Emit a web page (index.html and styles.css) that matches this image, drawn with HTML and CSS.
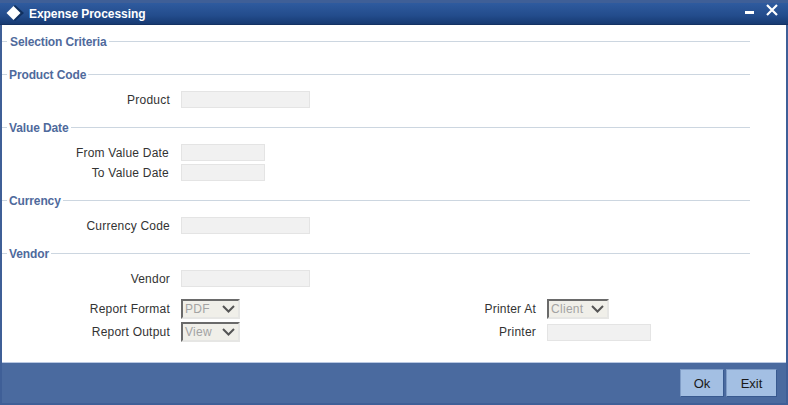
FILE: index.html
```html
<!DOCTYPE html>
<html lang="en">
<head>
<meta charset="utf-8">
<title>Expense Processing</title>
<link rel="stylesheet" href="styles.css">
</head>
<body>
<div class="window">
  <header class="titlebar">
    <svg class="logo" width="18" height="18" viewBox="0 0 18 18"><path d="M9 1l9 8-9 8-8-8z" fill="#10305f"/><path d="M7.500 2l7 7-7 7-7-7z" fill="#fff"/></svg>
    <h1 class="title">Expense Processing</h1>
    <div class="controls">
      <span class="minimize"></span>
      <svg class="close" width="14" height="13" viewBox="0 0 14 13"><path d="M2 1l10 10M12 1L2 11" stroke="#fff" stroke-width="2.2" fill="none"/></svg>
    </div>
  </header>
  <main class="content">
    <div class="legend first"><span>Selection Criteria</span></div>
    <div class="legend gap-a"><span>Product Code</span></div>
    <div class="row row-first"><label class="lab">Product</label><span class="input wide"></span></div>
    <div class="legend gap-b"><span>Value Date</span></div>
    <div class="row row-first"><label class="lab lab-n">From Value Date</label><span class="input narrow"></span></div>
    <div class="row row-tight"><label class="lab lab-n">To Value Date</label><span class="input narrow"></span></div>
    <div class="legend gap-b"><span>Currency</span></div>
    <div class="row row-first"><label class="lab">Currency Code</label><span class="input wide"></span></div>
    <div class="legend gap-b"><span>Vendor</span></div>
    <div class="row row-first"><label class="lab">Vendor</label><span class="input wide"></span></div>
    <div class="row row-report">
      <label class="lab">Report Format</label>
      <span class="select sel-report"><span class="val">PDF</span><svg class="chev" width="13" height="8" viewBox="0 0 13 8"><path d="M1 1l5.500 5.500L12 1" stroke="#555" stroke-width="2" fill="none"/></svg></span>
      <label class="lab lab-r">Printer At</label>
      <span class="select sel-client"><span class="val">Client</span><svg class="chev" width="13" height="8" viewBox="0 0 13 8"><path d="M1 1l5.500 5.500L12 1" stroke="#555" stroke-width="2" fill="none"/></svg></span>
    </div>
    <div class="row row-output">
      <label class="lab">Report Output</label>
      <span class="select sel-report"><span class="val">View</span><svg class="chev" width="13" height="8" viewBox="0 0 13 8"><path d="M1 1l5.500 5.500L12 1" stroke="#555" stroke-width="2" fill="none"/></svg></span>
      <label class="lab lab-r">Printer</label>
      <span class="input printer"></span>
    </div>
  </main>
  <footer class="footer">
    <button class="btn btn-ok">Ok</button>
    <button class="btn btn-exit">Exit</button>
  </footer>
</div>
</body>
</html>
```
FILE: styles.css
```css
html, body { margin: 0; padding: 0; }
body { width: 788px; height: 405px; overflow: hidden; font-family: "Liberation Sans", Arial, sans-serif; font-size: 12px; color: #333; }
.window { width: 788px; height: 405px; box-sizing: border-box; display: flex; flex-direction: column; background: #3f5f97; padding: 0 2px 2px 2px; }
.titlebar { height: 25px; flex: none; margin: 0 -2px; box-sizing: border-box; display: flex; align-items: center; padding: 3px 9px 0 6px; color: #fff; background: linear-gradient(#2f5b9f, #234c8c 60%, #173a72); border-top: 3px solid #3f5f97; border-bottom: 1px solid #143263; }
.logo { flex: none; margin-top: -5px; }
.title { margin: -2px 0 0 5px; font-size: 12px; font-weight: bold; letter-spacing: -0.05px; color: #fff; }
.controls { margin-left: auto; display: flex; align-items: flex-start; gap: 11px; padding-bottom: 9px; }
.minimize { width: 9px; height: 3px; background: #fff; margin-top: 7px; }
.close { display: block; }
.content { flex: none; height: 337px; background: #fff; box-sizing: border-box; padding-right: 36px; padding-top: 9px; }
.legend { display: flex; align-items: center; height: 14px; font-weight: bold; letter-spacing: -0.12px; color: #4f6a9c; }
.legend span { padding: 1px 2px 0; }
.legend::before { content: ""; width: 5px; height: 1px; background: #ccd6e0; flex: none; }
.legend::after { content: ""; flex: 1; height: 1px; background: #ccd6e0; }
.first span { padding-left: 3px; }
.gap-a { margin-top: 19px; }
.gap-b { margin-top: 12px; }
.row { display: flex; align-items: center; height: 17px; }
.row-first { margin-top: 10px; }
.row-tight { margin-top: 3px; }
.row-report { margin-top: 12px; height: 20px; }
.row-output { margin-top: 3px; height: 20px; }
.lab { width: 168px; flex: none; text-align: right; letter-spacing: 0.22px; color: #333; }
.lab-n { width: 167px; }
.input { display: block; height: 17px; box-sizing: border-box; background: #f1f1f1; border: 1px solid #e4e4e4; flex: none; margin-left: 11px; }
.lab-n + .input { margin-left: 12px; }
.wide { width: 129px; }
.narrow { width: 84px; }
.select { flex: none; margin-left: 11px; height: 20px; box-sizing: border-box; display: flex; align-items: center; justify-content: space-between; background: #f0efe9; color: #a3a3a3; letter-spacing: 0.3px; border: 2px solid; border-color: #6a6a6a #e6e6e4 #e6e6e4 #6a6a6a; padding: 0 3px 0 2px; }
.sel-report { width: 59px; }
.sel-client { width: 62px; }
.lab-r { width: 296px; }
.printer { width: 104px; }
.footer { flex: 1; display: flex; justify-content: flex-end; align-items: flex-start; gap: 2px; padding: 6px 9px 0 0; background: #4a6a9f; border-top: 1px solid #b9c8e2; }
.btn { width: 44px; height: 28px; padding: 0; font-family: inherit; font-size: 13px; color: #1a1a1a; background: #a3bfe3; border: 1px solid; border-color: #7f9cc6 #38598f #38598f #7f9cc6; }
.btn-exit { width: 51px; }
```
